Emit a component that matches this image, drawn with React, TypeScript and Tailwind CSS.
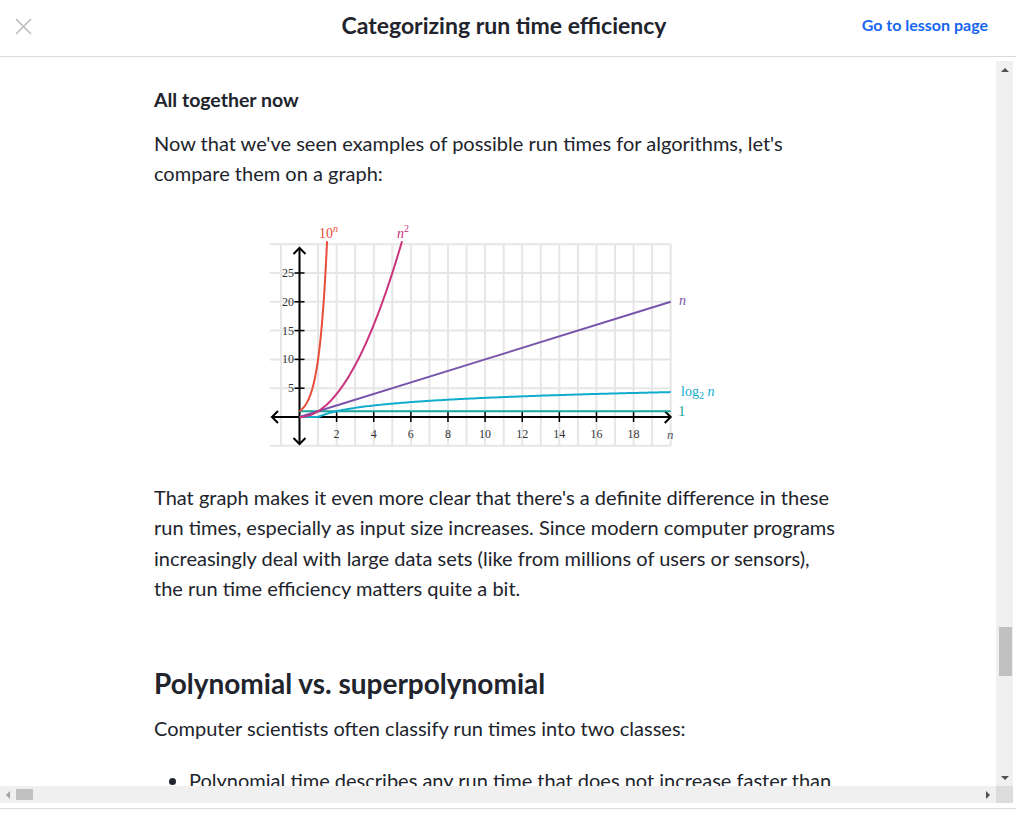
import React from "react";

const X0 = 38.5;
const UX = 18.56;
const Y0 = 198;
const UY = 5.76;
const px = (u: number) => X0 + UX * u;
const py = (v: number) => Y0 - UY * v;

const curve = (f: (u: number) => number, from: number, to: number, steps = 80) => {
  const pts: string[] = [];
  for (let i = 0; i <= steps; i++) {
    const u = from + ((to - from) * i) / steps;
    pts.push(`${px(u).toFixed(2)},${py(f(u)).toFixed(2)}`);
  }
  return "M" + pts.join(" L");
};

const serif = { fontFamily: '"Liberation Serif", "DejaVu Serif", serif' };

const Graph = () => {
  const vLines = Array.from({ length: 22 }, (_, i) => i - 1);
  const hLines = [-5, 0, 5, 10, 15, 20, 25, 30];
  const xTicks = [2, 4, 6, 8, 10, 12, 14, 16, 18];
  const yTicks = [5, 10, 15, 20, 25];

  return (
    <svg width="476" height="240" viewBox="0 0 476 240" style={serif}>
      {/* grid */}
      {vLines.map((u) => (
        <line key={"v" + u} x1={px(u)} x2={px(u)} y1={py(30)} y2={py(-5)} stroke="#e6e6e6" strokeWidth="2" />
      ))}
      {hLines.map((v) => (
        <line key={"h" + v} x1={9} x2={px(20)} y1={py(v)} y2={py(v)} stroke="#e6e6e6" strokeWidth="2" />
      ))}

      {/* axes */}
      <line x1={11} x2={px(20)} y1={Y0} y2={Y0} stroke="#000" strokeWidth="2" />
      <line x1={X0} x2={X0} y1={29} y2={225} stroke="#000" strokeWidth="2" />
      <path d="M17 192 L11 198 L17 204" fill="none" stroke="#000" strokeWidth="2" />
      <path d={`M${px(20) - 6} 192 L${px(20)} 198 L${px(20) - 6} 204`} fill="none" stroke="#000" strokeWidth="2" />
      <path d={`M${X0 - 6} 35 L${X0} 29 L${X0 + 6} 35`} fill="none" stroke="#000" strokeWidth="2" />
      <path d={`M${X0 - 6} 219 L${X0} 225 L${X0 + 6} 219`} fill="none" stroke="#000" strokeWidth="2" />
      {xTicks.map((u) => (
        <g key={"xt" + u}>
          <line x1={px(u)} x2={px(u)} y1={Y0 - 5} y2={Y0 + 5} stroke="#000" strokeWidth="1.5" />
          <text x={px(u)} y={219} fontSize="12" textAnchor="middle" fill="#333">
            {u}
          </text>
        </g>
      ))}
      {yTicks.map((v) => (
        <g key={"yt" + v}>
          <line x1={X0 - 5} x2={X0 + 5} y1={py(v)} y2={py(v)} stroke="#000" strokeWidth="1.5" />
          <text x={33} y={py(v) + 4} fontSize="12" textAnchor="end" fill="#333">
            {v}
          </text>
        </g>
      ))}

      {/* curves */}
      <path d={curve(() => 1, 0, 20, 2)} fill="none" stroke="#18a69c" strokeWidth="2" />
      <path
        d={curve((u) => (u < 1 ? 0 : Math.log2(u)), 0, 20, 200)}
        fill="none"
        stroke="#11accd"
        strokeWidth="2"
      />
      <path d={curve((u) => u, 0, 20, 2)} fill="none" stroke="#7854ab" strokeWidth="2" />
      <path d={curve((u) => u * u, 0, Math.sqrt(30.5))} fill="none" stroke="#ca337c" strokeWidth="2" />
      <path d={curve((u) => Math.pow(10, u), 0, Math.log10(30.5))} fill="none" stroke="#e84d39" strokeWidth="2" />

      {/* labels */}
      <text x={58} y={19} fontSize="14" fill="#e84d39">
        10
        <tspan fontSize="10" dy="-6" fontStyle="italic">
          n
        </tspan>
      </text>
      <text x={136} y={19} fontSize="14" fill="#ca337c" fontStyle="italic">
        n
        <tspan fontSize="10" dy="-6" fontStyle="normal">
          2
        </tspan>
      </text>
      <text x={418} y={86} fontSize="14" fill="#7854ab" fontStyle="italic">
        n
      </text>
      <text x={420} y={177} fontSize="14" fill="#11accd">
        log
        <tspan fontSize="10" dy="3">
          2
        </tspan>
        <tspan dy="-3" fontStyle="italic">
          {" "}n
        </tspan>
      </text>
      <text x={417} y={197} fontSize="15" fill="#18a69c">
        1
      </text>
      <text x={406} y={220} fontSize="13" fill="#555" fontStyle="italic">
        n
      </text>
    </svg>
  );
};

const Tri = ({ dir }: { dir: "up" | "down" | "left" | "right" }) => {
  const d = {
    up: "M0 4 L4 0 L8 4 Z",
    down: "M0 0 L8 0 L4 4 Z",
    left: "M4 0 L4 8 L0 4 Z",
    right: "M0 0 L4 4 L0 8 Z",
  }[dir];
  const w = dir === "up" || dir === "down" ? 8 : 4;
  const h = dir === "up" || dir === "down" ? 4 : 8;
  return (
    <svg width={w} height={h} viewBox={`0 0 ${w} ${h}`}>
      <path d={d} fill={dir === "left" ? "#a3a3a3" : "#505050"} />
    </svg>
  );
};

export default function App() {
  return (
    <div
      className="w-[1016px] h-[813px] bg-white flex flex-col overflow-hidden text-[#21242c]"
      style={{ fontFamily: 'Lato, "Noto Sans", sans-serif' }}
    >
      {/* header */}
      <header className="h-[57px] shrink-0 border-b border-[#dadada] grid grid-cols-[1fr_auto_1fr] items-center px-[15px]">
        <div className="flex">
          <button className="w-[17px] h-[17px] flex items-center justify-center -mt-[3px]" aria-label="Close">
            <svg width="17" height="17" viewBox="0 0 17 17">
              <path d="M1 1 L16 16 M16 1 L1 16" stroke="#bdbdbd" strokeWidth="1.6" />
            </svg>
          </button>
        </div>
        <h1 className="text-center text-[23px] font-bold -mt-[5px] -ml-[8px]">Categorizing run time efficiency</h1>
        <div className="flex justify-end">
          <a className="text-[16px] font-bold text-[#1865f2] mr-[13px] -mt-[6px]">Go to lesson page</a>
        </div>
      </header>

      {/* body */}
      <div className="flex flex-1 min-h-0">
        <main className="flex-1 overflow-hidden pl-[154px] pr-[158px] pt-[28px]">
          <h3 className="text-[19.5px] font-bold leading-[30px]">All together now</h3>
          <p className="mt-[13px] text-[20px] leading-[30px]">
            Now that we've seen examples of possible run times for algorithms, let's compare them on a graph:
          </p>
          <div className="flex justify-center mt-[31px] pl-[6px]">
            <Graph />
          </div>
          <p className="mt-[23px] text-[20px] leading-[30.3px]">
            That graph makes it even more clear that there's a definite difference in these run times, especially as
            input size increases. Since modern computer programs increasingly deal with large data sets (like from
            millions of users or sensors), the run time efficiency matters quite a bit.
          </p>
          <h2 className="mt-[62px] text-[28px] font-bold leading-[36px]">Polynomial vs. superpolynomial</h2>
          <p className="mt-[12px] text-[20px] leading-[30px]">
            Computer scientists often classify run times into two classes:
          </p>
          <ul className="mt-[22px] text-[20px] leading-[30px] list-disc pl-[35px]">
            <li>Polynomial time describes any run time that does not increase faster than</li>
          </ul>
        </main>
        <div className="w-[17px] mt-[4px] bg-[#f0f0f0] flex flex-col items-center relative">
          <div className="h-[17px] flex items-center justify-center">
            <Tri dir="up" />
          </div>
          <div className="flex-1 relative">
            <div className="absolute top-[549px] left-[-6px] w-[13px] h-[49px] bg-[#c1c1c1]" />
          </div>
          <div className="h-[17px] flex items-center justify-center">
            <Tri dir="down" />
          </div>
        </div>
        <div className="w-[3px]" />
      </div>

      {/* horizontal scrollbar */}
      <div className="h-[17px] shrink-0 flex">
        <div className="w-[996px] bg-[#f0f0f0] flex items-center">
          <div className="w-[16px] flex justify-center">
            <Tri dir="left" />
          </div>
          <div className="w-[17px] h-[11px] bg-[#c1c1c1]" />
          <div className="flex-1" />
          <div className="w-[17px] flex justify-center">
            <Tri dir="right" />
          </div>
        </div>
        <div className="w-[17px] bg-[#dcdcdc]" />
      </div>
      <div className="h-[5px] shrink-0" />
      <div className="h-px shrink-0 bg-[#dadada]" />
      <div className="h-[4px] shrink-0" />
    </div>
  );
}
